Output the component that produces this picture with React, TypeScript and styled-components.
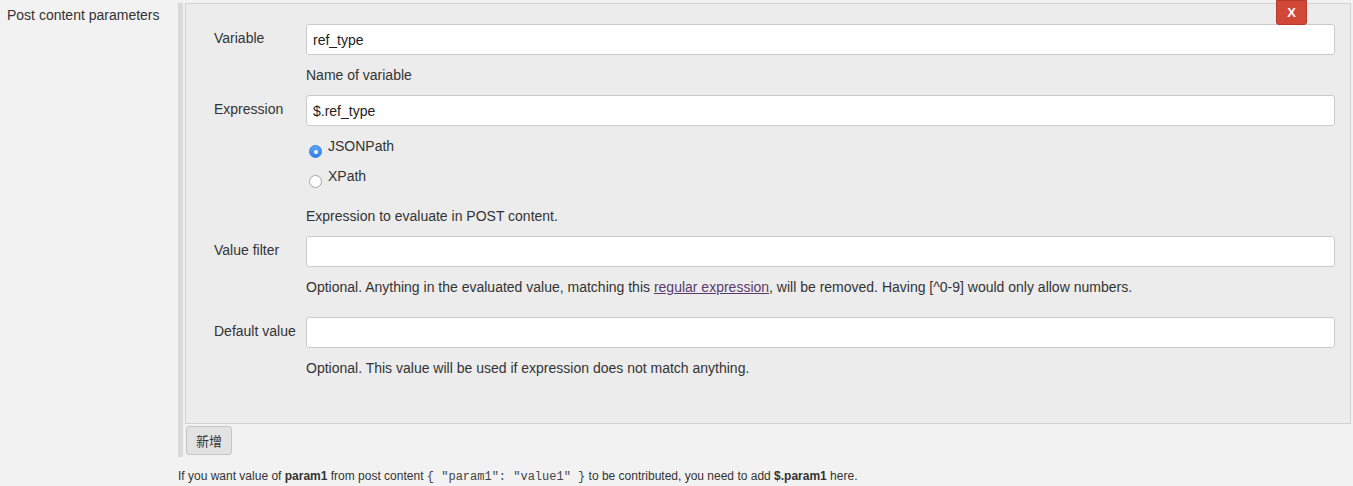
import React from "react";
import styled, { createGlobalStyle } from "styled-components";

const Global = createGlobalStyle`
  html, body { margin: 0; padding: 0; background: #f2f2f2; }
  body {
    font-family: "Liberation Sans", Arial, Helvetica, sans-serif;
    font-size: 14px;
    color: #333;
  }
  * { box-sizing: border-box; }
`;

const Page = styled.div`
  display: flex;
  width: 1353px;
  min-height: 486px;
`;

const SideLabel = styled.div`
  width: 178px;
  flex-shrink: 0;
  padding: 7px 0 0 7px;
  line-height: 17px;
`;

const Main = styled.div`
  flex: 1;
  padding: 3px 2px 0 0;
  min-width: 0;
`;

const Repeated = styled.div`
  border-left: 5px solid #dadada;
  padding: 0 0 2px 2px;
`;

const Panel = styled.div`
  position: relative;
  background: #ececec;
  border: 1px solid #d2d2d2;
  padding: 20px 15px 46px 28px;
`;

const DeleteButton = styled.button`
  position: absolute;
  top: -4px;
  right: 43px;
  width: 31px;
  height: 25px;
  padding: 0;
  background: #d24837;
  border: 1px solid #b9392a;
  border-radius: 0 0 3px 3px;
  color: #fff;
  font-family: "Liberation Sans", Arial, sans-serif;
  font-size: 13px;
  font-weight: bold;
  line-height: 22px;
  cursor: pointer;
`;

const Field = styled.div<{ $top?: number }>`
  display: grid;
  grid-template-columns: 92px 1fr;
  margin-top: ${(p) => p.$top ?? 0}px;
`;

const Label = styled.div`
  padding-top: 6px;
  line-height: 17px;
`;

const TextInput = styled.input`
  height: 31px;
  width: 100%;
  border: 1px solid #cbcbcb;
  border-radius: 3px;
  background: #fff;
  padding: 0 6px;
  font-family: "Liberation Sans", Arial, sans-serif;
  font-size: 14px;
  color: #222;
  outline: none;
`;

const Help = styled.div<{ $top?: number }>`
  margin-left: 92px;
  margin-top: ${(p) => p.$top ?? 12}px;
  line-height: 17px;
`;

const Link = styled.a`
  color: #5c3a6e;
  text-decoration: underline;
`;

const Radios = styled.div`
  margin-left: 92px;
  margin-top: 12px;
  display: flex;
  flex-direction: column;
`;

const RadioRow = styled.label`
  display: flex;
  align-items: flex-start;
  height: 30px;
  line-height: 17px;
  padding-left: 3px;
`;

const RadioDot = styled.span<{ $checked?: boolean }>`
  width: 13px;
  height: 13px;
  margin-top: 7px;
  margin-right: 6px;
  border-radius: 50%;
  flex-shrink: 0;
  display: flex;
  align-items: center;
  justify-content: center;
  background: ${(p) =>
    p.$checked ? "linear-gradient(#5ea5fa, #2f80ee)" : "#fff"};
  border: 1px solid ${(p) => (p.$checked ? "#2f7fe6" : "#a5a5a5")};
  &::after {
    content: "";
    display: ${(p) => (p.$checked ? "block" : "none")};
    width: 4px;
    height: 4px;
    border-radius: 50%;
    background: #fff;
  }
`;

const AddButton = styled.button`
  margin: 2px 0 0 1px;
  height: 29px;
  padding: 0 9px;
  background: #e2e2e2;
  border: 1px solid #c6c6c6;
  border-radius: 3px;
  font-family: "Liberation Sans", "Noto Sans CJK SC", sans-serif;
  font-size: 13px;
  color: #333;
`;

const Note = styled.div`
  margin-top: 12px;
  font-size: 12px;
  line-height: 15px;
`;

const Code = styled.code`
  font-family: "Liberation Mono", "Courier New", monospace;
  font-size: 12px;
  color: #444;
`;

export default function App() {
  return (
    <>
      <Global />
      <Page>
        <SideLabel>Post content parameters</SideLabel>
        <Main>
          <Repeated>
            <Panel>
              <DeleteButton>X</DeleteButton>
              <Field>
                <Label>Variable</Label>
                <TextInput defaultValue="ref_type" />
              </Field>
              <Help>Name of variable</Help>
              <Field $top={11}>
                <Label>Expression</Label>
                <TextInput defaultValue="$.ref_type" />
              </Field>
              <Radios>
                <RadioRow>
                  <RadioDot $checked />
                  JSONPath
                </RadioRow>
                <RadioRow>
                  <RadioDot />
                  XPath
                </RadioRow>
              </Radios>
              <Help $top={10}>Expression to evaluate in POST content.</Help>
              <Field $top={11}>
                <Label>Value filter</Label>
                <TextInput />
              </Field>
              <Help>
                Optional. Anything in the evaluated value, matching this{" "}
                <Link href="#">regular expression</Link>, will be removed.
                Having [^0-9] would only allow numbers.
              </Help>
              <Field $top={21}>
                <Label>Default value</Label>
                <TextInput />
              </Field>
              <Help>
                Optional. This value will be used if expression does not match
                anything.
              </Help>
            </Panel>
            <AddButton>新增</AddButton>
          </Repeated>
          <Note>
            If you want value of <b>param1</b> from post content{" "}
            <Code>{'{ "param1": "value1" }'}</Code> to be contributed, you need
            to add <b>$.param1</b> here.
          </Note>
        </Main>
      </Page>
    </>
  );
}
